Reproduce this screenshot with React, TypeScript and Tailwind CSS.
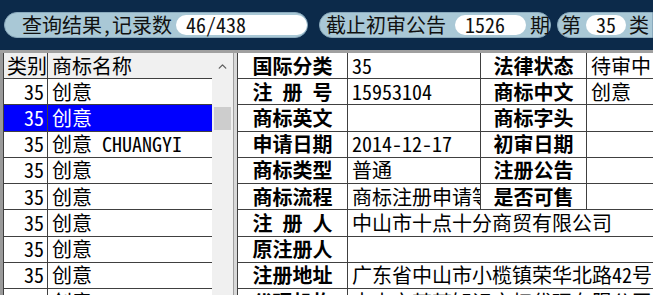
import React from "react";
import { ChevronUp } from "lucide-react";

const FONT = { fontFamily: '"Noto Sans Mono CJK SC", "Noto Sans CJK SC", "Liberation Mono", monospace' };

const listRows = [
  { c: "35", n: "创意", sel: false },
  { c: "35", n: "创意", sel: true },
  { c: "35", n: "创意 CHUANGYI", sel: false },
  { c: "35", n: "创意", sel: false },
  { c: "35", n: "创意", sel: false },
  { c: "35", n: "创意", sel: false },
  { c: "35", n: "创意", sel: false },
  { c: "35", n: "创意", sel: false },
  { c: "35", n: "创意", sel: false },
];

function Label({ text }: { text: string }) {
  const chars = text.split(" ").filter(Boolean);
  if (text.includes(" ")) {
    return (
      <div className="flex justify-between w-[80px] font-bold">
        {chars.map((c, i) => (
          <span key={i}>{c}</span>
        ))}
      </div>
    );
  }
  return <span className="font-bold">{text}</span>;
}

type Row = { l1: string; v1: string; l2?: string; v2?: string };
const detailRows: Row[] = [
  { l1: "国际分类", v1: "35", l2: "法律状态", v2: "待审中" },
  { l1: "注 册 号", v1: "15953104", l2: "商标中文", v2: "创意" },
  { l1: "商标英文", v1: "", l2: "商标字头", v2: "" },
  { l1: "申请日期", v1: "2014-12-17", l2: "初审日期", v2: "" },
  { l1: "商标类型", v1: "普通", l2: "注册公告", v2: "" },
  { l1: "商标流程", v1: "商标注册申请等待驳回", l2: "是否可售", v2: "" },
  { l1: "注 册 人", v1: "中山市十点十分商贸有限公司" },
  { l1: "原注册人", v1: "" },
  { l1: "注册地址", v1: "广东省中山市小榄镇荣华北路42号" },
  { l1: "代理机构", v1: "中山市某某知识产权代理有限公司" },
];

export default function App() {
  return (
    <div className="w-[653px] h-[295px] overflow-hidden bg-[#0c2a4a] text-[20px] leading-none text-black" style={FONT}>
      {/* top bar */}
      <div className="h-[50px] flex items-start pt-[12px] whitespace-nowrap">
        <div className="ml-[4px] w-[310px] h-[26px] rounded-full bg-[#a9c8d6] border border-[#8aaabd] flex items-center pl-[17px] text-[#111]">
          <span>查询结果,记录数</span>
          <div className="ml-[4px] w-[131px] h-[20px] rounded-full bg-white flex items-center pl-[10px]">46/438</div>
        </div>
        <div className="ml-[11px] w-[233px] h-[26px] rounded-full bg-[#a9c8d6] border border-[#8aaabd] flex items-center pl-[6px] text-[#111]">
          <span>截止初审公告</span>
          <div className="ml-[9px] w-[71px] h-[20px] rounded-full bg-white flex items-center pl-[10px]">1526</div>
          <span className="ml-[4px]">期</span>
        </div>
        <div className="ml-[6px] w-[110px] h-[26px] rounded-l-full bg-[#a9c8d6] border border-[#8aaabd] flex items-center pl-[3px] text-[#111]">
          <span>第</span>
          <div className="ml-[5px] w-[40px] h-[20px] rounded-full bg-white flex items-center justify-center">35</div>
          <span className="ml-[3px]">类</span>
        </div>
      </div>

      {/* panels */}
      <div className="flex h-[245px] border-t-[3px] border-[#a0a0a0]">
        {/* left list */}
        <div className="flex w-[233px] border-l-[3px] border-[#9a9a9a] bg-[#f0f0f0]">
          <div className="w-[209px] border-l border-[#404040] bg-white">
            <div className="flex h-[26px] bg-[#f0f0f0] border-b border-[#404040]">
              <div className="w-[44px] border-r border-[#404040] flex items-center pl-[3px]">类别</div>
              <div className="flex-1 flex items-center pl-[4px]">商标名称</div>
            </div>
            {listRows.map((r, i) => (
              <div
                key={i}
                className={
                  "flex h-[26.25px] border-b border-[#404040] " + (r.sel ? "bg-[#0000ff] text-white" : "bg-white")
                }
              >
                <div className="w-[44px] border-r border-[#404040] flex items-center justify-end pr-[3px]">{r.c}</div>
                <div className="flex-1 flex items-center pl-[4px] whitespace-nowrap">{r.n}</div>
              </div>
            ))}
          </div>
          <div className="w-[21px] bg-[#f0f0f0] flex flex-col items-center">
            <div className="h-[26px] flex items-center justify-center">
              <ChevronUp size={13} strokeWidth={2.5} color="#606060" />
            </div>
            <div className="mt-[28px] w-[17px] h-[23px] bg-[#cdcdcd]" />
          </div>
        </div>
        {/* divider */}
        <div className="w-[4px] bg-[#d8d8d8] border-l border-[#a0a0a0]" />
        {/* detail table */}
        <div className="flex-1 border-l border-[#404040] bg-white overflow-hidden">
          {detailRows.map((r, i) => (
            <div key={i} className={"flex border-b border-[#404040] whitespace-nowrap " + (i === 0 ? "h-[26px]" : "h-[26.25px]")}>
              <div className="w-[110px] shrink-0 border-r border-[#404040] flex items-center justify-center">
                <Label text={r.l1} />
              </div>
              {r.l2 !== undefined ? (
                <>
                  <div className="w-[133px] shrink-0 border-r border-[#404040] flex items-center pl-[4px] overflow-hidden">{r.v1}</div>
                  <div className="w-[106px] shrink-0 border-r border-[#404040] flex items-center justify-center">
                    <Label text={r.l2} />
                  </div>
                  <div className="flex-1 flex items-center pl-[4px]">{r.v2}</div>
                </>
              ) : (
                <div className="flex-1 flex items-center pl-[4px]">{r.v1}</div>
              )}
            </div>
          ))}
        </div>
      </div>
    </div>
  );
}
